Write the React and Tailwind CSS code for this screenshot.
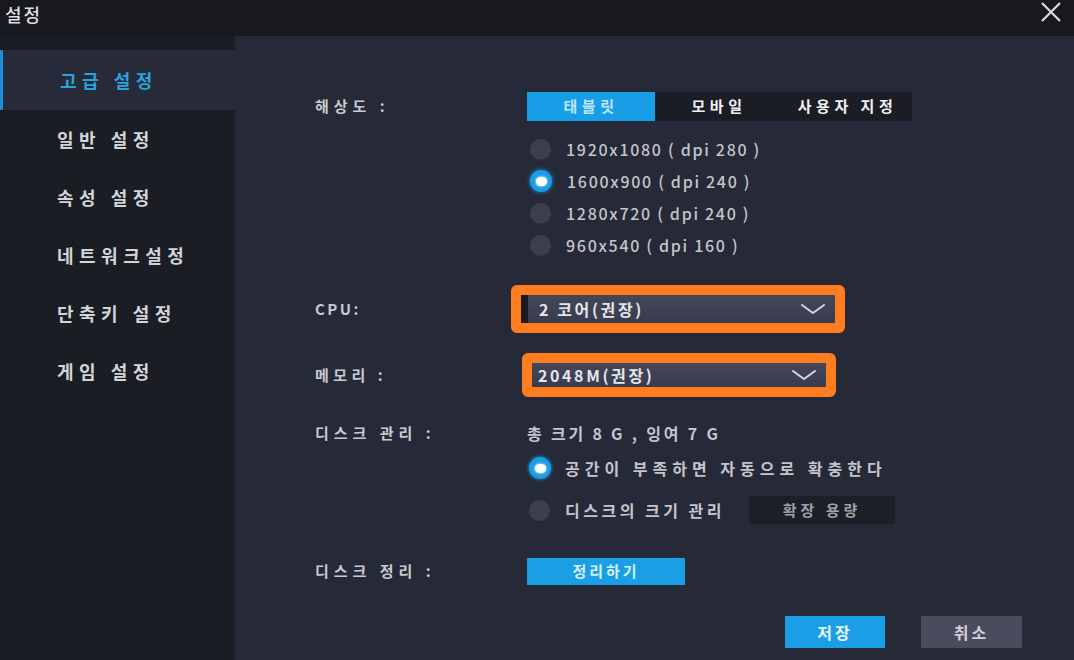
import React from 'react'

const FONT = { fontFamily: '"Noto Sans CJK KR", "Noto Sans", sans-serif' }

const menu = ['고급 설정', '일반 설정', '속성 설정', '네트워크설정', '단축키 설정', '게임 설정']
const resolutions = [
  { label: '1920x1080 ( dpi 280 )', checked: false },
  { label: '1600x900 ( dpi 240 )', checked: true },
  { label: '1280x720 ( dpi 240 )', checked: false },
  { label: '960x540 ( dpi 160 )', checked: false },
]

const Radio = ({ checked }) =>
  checked ? (
    <span className="w-[22px] h-[22px] rounded-full bg-[#1a9be3] flex items-center justify-center shadow-[0_0_4px_#1a9be3] shrink-0">
      <span className="w-[11px] h-[9px] rounded-full bg-white shadow-[0_0_3px_#ffffff]" />
    </span>
  ) : (
    <span className="w-[21px] h-[21px] rounded-full bg-[#3b3e4d] shrink-0" />
  )

const Chevron = () => (
  <svg width="24" height="11" viewBox="0 0 24 11" fill="none">
    <polyline points="1,1 12,9 23,1" stroke="#d4d7e0" strokeWidth="2" strokeLinecap="round" strokeLinejoin="round" />
  </svg>
)

const Select = ({ value, height, darkEdge }) => (
  <div className="rounded-[6px] border-[10px] border-[#ff7d1f] bg-[#ff7d1f]">
    <div
      className={`flex items-center justify-between bg-gradient-to-b from-[#44475a] to-[#393c4d] pr-[10px] ${darkEdge ? 'border-l-[7px] border-[#1a1c25] pl-[11px]' : 'pl-[6px]'}`}
      style={{ height }}
    >
      <span className="text-[16px] font-bold tracking-[2.6px] text-[#e4e5ea]">{value}</span>
      <Chevron />
    </div>
  </div>
)

export default function App() {
  return (
    <div className="w-[1074px] h-[660px] flex flex-col bg-[#262937] overflow-hidden" style={FONT}>
      <div className="h-[36px] shrink-0 bg-[#17191f] flex items-center justify-between pl-[5px] pr-[12px]">
        <span className="text-[18px] text-[#dedfe3] font-medium tracking-[2px] -mt-[8px]">설정</span>
        <svg width="22" height="20" viewBox="0 0 22 20" className="-mt-[12px]">
          <path d="M2 1 L20 19 M20 1 L2 19" stroke="#d9dadd" strokeWidth="2.2" />
        </svg>
      </div>

      <div className="flex flex-1">
        <div className="w-[235px] shrink-0 bg-[#1b1d25] pt-[14px]">
          {menu.map((item, i) => (
            <div
              key={item}
              className={`h-[58px] flex items-center pl-[57px] text-[18px] font-bold tracking-[5.5px] ${
                i === 0 ? 'h-[60px] bg-[#272a39] text-[#27a3dd] border-l-[3px] border-[#1c8fd8] pl-[54px]' : 'text-[#d3d4d8]'
              }`}
            >
              {item}
            </div>
          ))}
        </div>

        <div className="flex-1 flex flex-col pl-[80px] pt-[56px] pr-[52px] text-[#c9cad0]">
          <div className="flex items-start">
            <div className="w-[212px] h-[29px] flex items-center text-[15px] font-bold tracking-[5px]">해상도 :</div>
            <div className="flex flex-col">
              <div className="flex h-[29px] bg-[#1b1d26] w-[385px] text-[15px] font-bold tracking-[4.5px]">
                <div className="w-[128px] bg-[#189ee6] text-[#bfe6fb] flex items-center justify-center">태블릿</div>
                <div className="w-[128px] text-[#f0f0f2] flex items-center justify-center">모바일</div>
                <div className="w-[129px] text-[#f0f0f2] flex items-center justify-center">사용자 지정</div>
              </div>
              <div className="mt-[12px] flex flex-col">
                {resolutions.map((r) => (
                  <div key={r.label} className="h-[32px] flex items-center pl-[3px]">
                    <Radio checked={r.checked} />
                    <span className="ml-[15px] text-[16px] font-medium tracking-[1.7px] text-[#c4c5cb]">{r.label}</span>
                  </div>
                ))}
              </div>
            </div>
          </div>

          <div className="flex items-center mt-[24px]">
            <div className="w-[196px] text-[15px] font-bold tracking-[2.5px]">CPU:</div>
            <div className="w-[334px]">
              <Select value="2 코어(권장)" height={28} darkEdge />
            </div>
          </div>

          <div className="flex items-center mt-[20px]">
            <div className="w-[207px] text-[15px] font-bold tracking-[4.5px]">메모리 :</div>
            <div className="w-[314px]">
              <Select value="2048M(권장)" height={24} />
            </div>
          </div>

          <div className="flex items-center mt-[24px] h-[24px]">
            <div className="w-[212px] text-[15px] font-bold tracking-[5px]">디스크 관리 :</div>
            <span className="text-[16px] font-bold tracking-[2.8px] text-[#c4c5cb]">총 크기 8 G , 잉여 7 G</span>
          </div>

          <div className="flex items-center mt-[7px] h-[32px] pl-[214px]">
            <Radio checked />
            <span className="ml-[14px] text-[16px] font-bold tracking-[5px] text-[#c4c5cb]">공간이 부족하면 자동으로 확충한다</span>
          </div>

          <div className="flex items-center mt-[10px] h-[32px] pl-[214px]">
            <Radio checked={false} />
            <span className="ml-[15px] w-[184px] text-[16px] font-bold tracking-[3.5px] text-[#c4c5cb]">디스크의 크기 관리</span>
            <div className="w-[146px] h-[28px] bg-[#1c1e28] flex items-center justify-center text-[15px] font-bold tracking-[4px] text-[#9fa1aa]">
              확장 용량
            </div>
          </div>

          <div className="flex items-center mt-[31px] h-[28px]">
            <div className="w-[212px] text-[15px] font-bold tracking-[5px]">디스크 정리 :</div>
            <div className="w-[158px] h-[27px] bg-[#1a9fe6] flex items-center justify-center text-[15px] font-bold tracking-[3px] text-[#d7f0fd]">
              정리하기
            </div>
          </div>

          <div className="flex justify-end mt-[31px] gap-[36px]">
            <div className="w-[100px] h-[32px] bg-[#1a9fe6] flex items-center justify-center text-[16px] font-bold tracking-[3px] text-[#e6f5fd]">
              저장
            </div>
            <div className="w-[101px] h-[32px] bg-[#4a4c5d] flex items-center justify-center text-[16px] font-bold tracking-[3px] text-[#d0d1d6]">
              취소
            </div>
          </div>
        </div>
      </div>
    </div>
  )
}
